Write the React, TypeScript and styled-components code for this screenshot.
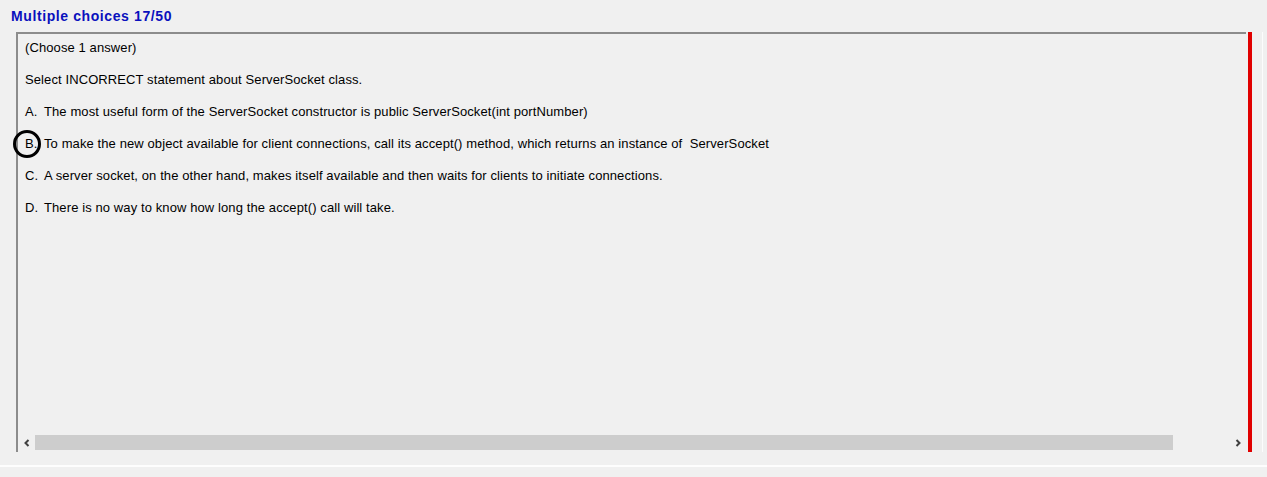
import React from "react";
import styled, { createGlobalStyle } from "styled-components";

const Global = createGlobalStyle`
  html, body { margin: 0; padding: 0; background: #f0f0f0; }
  body { font-family: "Liberation Sans", Arial, sans-serif; }
`;

const Page = styled.div`
  width: 1267px;
  height: 477px;
  background: #f0f0f0;
  display: flex;
  flex-direction: column;
  overflow: hidden;
`;

const Title = styled.div`
  height: 32px;
  box-sizing: border-box;
  padding: 8px 0 0 11px;
  color: #0a10bd;
  font-weight: bold;
  font-size: 14px;
  letter-spacing: 0.6px;
`;

const Body = styled.div`
  display: flex;
  margin-left: 16px;
  height: 420px;
`;

const Panel = styled.div`
  width: 1230px;
  box-sizing: border-box;
  border-top: 2px solid #8c8c8c;
  border-left: 2px solid #8c8c8c;
  display: flex;
  flex-direction: column;
`;

const Content = styled.div`
  flex: 1;
  padding: 6px 0 0 7px;
  display: flex;
  flex-direction: column;
  gap: 16px;
`;

const Line = styled.div`
  font-size: 13px;
  letter-spacing: 0.1px;
  line-height: 16px;
  color: #000;
  white-space: pre;
  position: relative;
  display: flex;
`;

const Letter = styled.span`
  display: inline-block;
  width: 19px;
`;

const Circle = styled.span`
  position: absolute;
  left: -12px;
  top: -6px;
  width: 22px;
  height: 22px;
  border: 3px solid #000;
  border-radius: 50%;
`;

const ScrollBar = styled.div`
  height: 17px;
  margin-bottom: 1px;
  display: flex;
  align-items: stretch;
  background: #f0f0f0;
`;

const Arrow = styled.div`
  width: 17px;
  display: flex;
  align-items: center;
  justify-content: center;
`;

const Track = styled.div`
  flex: 1;
  display: flex;
  padding: 1px 0;
`;

const Thumb = styled.div`
  width: 1138px;
  background: #cdcdcd;
`;

const RedBar = styled.div`
  width: 4px;
  margin-left: 2px;
  background: #e00000;
`;

const RightEdge = styled.div`
  width: 1px;
  margin-left: 10px;
  background: #fcfcfc;
`;

const Footer = styled.div`
  margin-top: 13px;
  border-top: 2px solid #fdfdfd;
  flex: 1;
`;

const options: [string, string][] = [
  ["A.", "The most useful form of the ServerSocket constructor is public ServerSocket(int portNumber)"],
  ["B.", "To make the new object available for client connections, call its accept() method, which returns an instance of  ServerSocket"],
  ["C.", "A server socket, on the other hand, makes itself available and then waits for clients to initiate connections."],
  ["D.", "There is no way to know how long the accept() call will take."],
];

export default function App() {
  return (
    <>
      <Global />
      <Page>
        <Title>Multiple choices 17/50</Title>
        <Body>
          <Panel>
            <Content>
              <Line>(Choose 1 answer)</Line>
              <Line>Select INCORRECT statement about ServerSocket class.</Line>
              {options.map(([l, t]) => (
                <Line key={l}>
                  {l === "B." && <Circle />}
                  <Letter>{l}</Letter>
                  {t}
                </Line>
              ))}
            </Content>
            <ScrollBar>
              <Arrow>
                <svg width="8" height="8" viewBox="0 0 8 8">
                  <path d="M5.5 1 L2.5 4 L5.5 7" stroke="#404040" strokeWidth="2" fill="none" />
                </svg>
              </Arrow>
              <Track>
                <Thumb />
              </Track>
              <Arrow>
                <svg width="8" height="8" viewBox="0 0 8 8">
                  <path d="M2.5 1 L5.5 4 L2.5 7" stroke="#404040" strokeWidth="2" fill="none" />
                </svg>
              </Arrow>
            </ScrollBar>
          </Panel>
          <RedBar />
          <RightEdge />
        </Body>
        <Footer />
      </Page>
    </>
  );
}
